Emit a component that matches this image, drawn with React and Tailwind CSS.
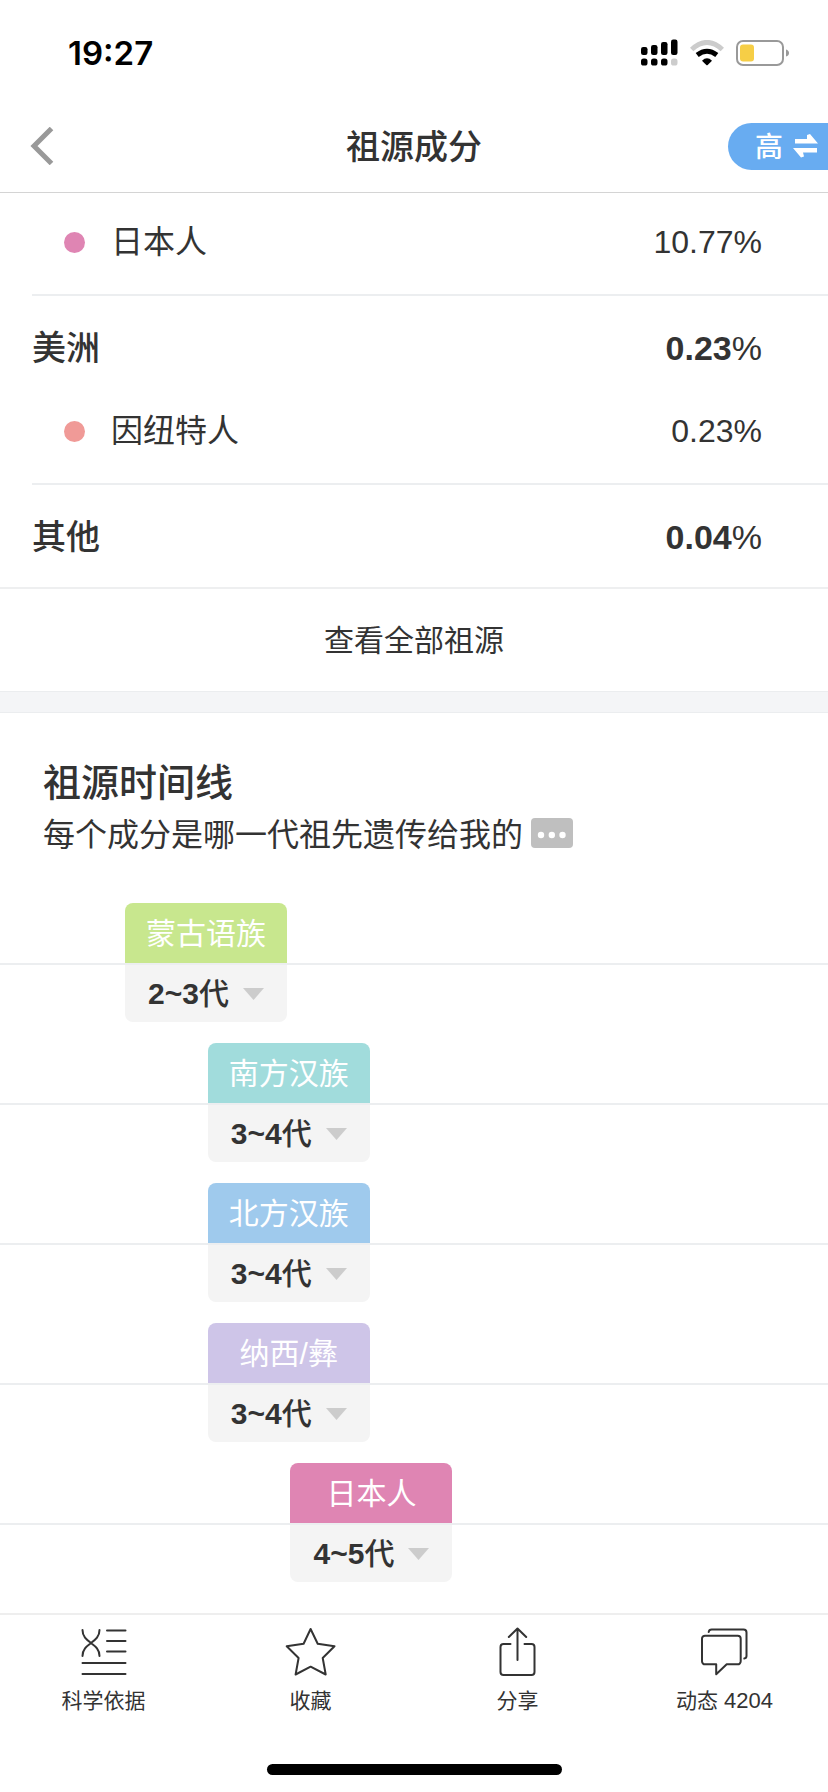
// src/pages/AncestryComposition.jsx
import React, { useState } from 'react';

const groups = [
    {
        items: [{ name: '日本人', value: '10.77', dot: 'bg-[#df85b3]' }],
    },
    {
        title: '美洲',
        value: '0.23',
        items: [{ name: '因纽特人', value: '0.23', dot: 'bg-[#f09a97]' }],
    },
    { title: '其他', value: '0.04', items: [] },
];

const timeline = [
    { name: '蒙古语族', range: '2~3', start: 15, color: 'bg-[#c8e78e]' },
    { name: '南方汉族', range: '3~4', start: 25, color: 'bg-[#a1dcdc]' },
    { name: '北方汉族', range: '3~4', start: 25, color: 'bg-[#9fcaed]' },
    { name: '纳西/彝', range: '3~4', start: 25, color: 'bg-[#cec5e8]' },
    { name: '日本人', range: '4~5', start: 35, color: 'bg-[#df85b3]' },
];

const line = {
    fill: 'none',
    stroke: 'currentColor',
    strokeWidth: 2,
    strokeLinecap: 'round',
    strokeLinejoin: 'round',
    'aria-hidden': true,
};

function ScienceIcon() {
    return (
        <svg width="46" height="48" viewBox="0 0 46 48" {...line}>
            <path d="M1.5 2C1.5 9 6 12 10 15S18.5 21 18.5 28M18.5 2C18.5 9 14 12 10 15S1.5 21 1.5 28" />
            <path d="M26 2.5h18.5M26 13h18.5M26 23.5h18.5M1.5 35h43M1.5 46h43" />
        </svg>
    );
}

function StarIcon() {
    return (
        <svg width="51" height="50" viewBox="0 0 51 50" {...line}>
            <path d="M25.6 2L32.7 16.7 49.5 19.3 37.7 31 40.7 47.5 25.6 39.7 10.6 47.5 13.6 31 1.7 19.3 18.6 16.7Z" />
        </svg>
    );
}

function ShareIcon() {
    return (
        <svg width="37" height="50" viewBox="0 0 37 50" {...line}>
            <path d="M11.5 17H4.5a3 3 0 0 0-3 3v25a3 3 0 0 0 3 3h28a3 3 0 0 0 3-3V20a3 3 0 0 0-3-3H25.5" />
            <path d="M18.5 33V1.5M9.8 10L18.5 1.5 27.2 10" />
        </svg>
    );
}

function ChatIcon() {
    return (
        <svg width="47" height="48" viewBox="0 0 47 48" {...line}>
            <path d="M4 7.7h32.7a3 3 0 0 1 3 3v22.6a3 3 0 0 1-3 3H25.7L15.2 46.3V36.3H4a3 3 0 0 1-3-3V10.7a3 3 0 0 1 3-3Z" />
            <path d="M7.7 4Q8 1.5 10.7 1.5H42.5a3 3 0 0 1 3 3V28Q45.5 30.2 43.3 30.5" />
        </svg>
    );
}

function StatusBar() {
    return (
        <div className="flex h-26 items-center justify-between pt-0.5 pl-[68px] pr-[38px] text-black">
            <span className="font-[Inter,sans-serif] text-[33px] leading-10 font-semibold">19:27</span>
            <div className="flex items-center gap-3">
                {/* Signal double SIM */}
                <svg width="37" height="28" viewBox="0 0 37 28" aria-hidden="true">
                    <rect x="0" y="8" width="6.5" height="8" rx="2.2" />
                    <rect x="10" y="6" width="6.5" height="10" rx="2.2" />
                    <rect x="20" y="3" width="6.5" height="13" rx="2.2" />
                    <rect x="30" y="0.5" width="6.5" height="15.5" rx="2.2" />
                    <rect x="0" y="19.5" width="6.5" height="7" rx="2.6" />
                    <rect x="10" y="19.5" width="6.5" height="7" rx="2.6" />
                    <rect x="20" y="19.5" width="6.5" height="7" rx="2.6" />
                    <rect x="30" y="19.5" width="6.5" height="7" rx="2.6" fill="#ccc" />
                </svg>
                <svg width="34" height="26" viewBox="0 0 34 26" fill="none" strokeWidth="5" aria-hidden="true">
                    <path d="M1.7 9.5Q17-4.5 32.3 9.5" stroke="#ccc" />
                    <path d="M7.2 15Q17 7.5 26.8 15" stroke="#000" />
                    <path d="M12 20.7Q17 15.8 22 20.7L17.7 25q-.7.6-1.4 0Z" fill="#000" />
                </svg>
                <svg width="54" height="26" viewBox="0 0 54 26" aria-hidden="true">
                    <rect x="1" y="1" width="46" height="24" rx="6" fill="none" stroke="#999" strokeWidth="2" />
                    <rect x="4" y="4.5" width="14" height="17" rx="3" fill="#f6ce46" />
                    <path d="M50 9.5q3 1 3 3.500t-3 3.500z" fill="#999" />
                </svg>
            </div>
        </div>
    );
}

function TopBar() {
    return (
        <header className="grid h-[89px] grid-cols-[1fr_auto_1fr] items-center border-b border-[#d4d4d4] pb-1">
            <button type="button" aria-label="返回" className="ml-[30px] w-6 cursor-pointer text-[#999]">
                <svg width="24" height="38" viewBox="0 0 24 38" fill="none" stroke="currentColor" strokeWidth="5">
                    <path d="M21.5 1.5L4 19L21.5 36.5" />
                </svg>
            </button>
            <h1 className="pt-0.5 text-[34px] leading-10 font-medium">祖源成分</h1>
            <button
                type="button"
                className="flex h-[47px] w-[100px] cursor-pointer items-center justify-end gap-2.5 justify-self-end rounded-l-full bg-[#68acf1] pr-2.5 text-white"
            >
                <span className="pt-1 text-[28px] leading-8 font-medium">高</span>
                <svg width="25" height="24" viewBox="0 0 25 24" fill="currentColor" aria-hidden="true">
                    <path d="M2 5H14V1L17 0 25 9.5H2ZM24 14H0L8 23.5 11 22.5 10 18.5H24Z" />
                </svg>
            </button>
        </header>
    );
}

function Group({ group, last }) {
    return (
        <section className={last ? 'pl-8' : 'ml-8 border-b-2 border-[#eceef0]'}>
            {group.title && (
                <div className="flex h-[102px] items-center justify-between pt-0.5 pr-[66px] text-[34px]">
                    <h2 className="font-medium">{group.title}</h2>
                    <span>
                        <b>{group.value}</b>%
                    </span>
                </div>
            )}
            {group.items.map((item) => (
                <div
                    key={item.name}
                    className={`flex items-start justify-between pr-[66px] pl-8 text-[32px] leading-12 ${group.title ? 'h-[85px] pt-[9px]' : 'h-[101px] pt-[25px]'}`}
                >
                    <span className="flex items-center gap-[26px]">
                        <i className={`size-[21px] rounded-full ${item.dot}`} />
                        {item.name}
                    </span>
                    <span>{item.value}%</span>
                </div>
            ))}
        </section>
    );
}

function TimelineRow({ entry }) {
    const [open, setOpen] = useState(false);
    const offset = { marginLeft: `${entry.start}%` };

    return (
        <li className="h-35">
            <div className="border-b-2 border-[#eceef0] pl-px">
                <div
                    className={`flex h-15 w-[162px] items-center justify-center rounded-t-lg text-[30px] text-white ${entry.color}`}
                    style={offset}
                >
                    {entry.name}
                </div>
            </div>
            <div className="pl-px">
                <button
                    type="button"
                    aria-expanded={open}
                    onClick={() => setOpen(!open)}
                    className="flex h-[57px] w-[162px] cursor-pointer items-center justify-center gap-3.5 rounded-b-lg bg-[#f4f4f4] text-[30px] font-medium"
                    style={offset}
                >
                    <span>
                        <b>{entry.range}</b>代
                    </span>
                    <svg width="21" height="12" viewBox="0 0 21 12" fill="#ccc" aria-hidden="true">
                        <path d="M0 0h21L10.5 12z" />
                    </svg>
                </button>
            </div>
        </li>
    );
}

function Tab({ icon, label, count }) {
    return (
        <button type="button" className="flex flex-1 cursor-pointer flex-col items-center gap-2.5">
            <span className="flex h-[50px] items-center">{icon}</span>
            <span className="text-[21px] leading-7">
                {label}
                {count && <span className="text-[22px]"> {count}</span>}
            </span>
        </button>
    );
}

export default function App() {
    return (
        <div className="flex min-h-screen flex-col bg-white font-['Liberation_Sans','Noto_Sans_CJK_SC',sans-serif] text-[#333]">
            <StatusBar />
            <TopBar />

            <main className="flex-1">
                {groups.map((group, i) => (
                    <Group key={i} group={group} last={i === groups.length - 1} />
                ))}
                <button
                    type="button"
                    className="flex h-[104px] w-full cursor-pointer items-center justify-center border-t-2 border-[#eeeff0] text-[30px]"
                >
                    查看全部祖源
                </button>
                <div className="h-[22px] border-y border-[#ebedef] bg-[#f4f5f7]" />

                <div className="px-[43px] pt-[42px]">
                    <h2 className="text-[38px] leading-14 font-medium">祖源时间线</h2>
                    <p className="flex items-center gap-2 text-[32px] leading-12">
                        每个成分是哪一代祖先遗传给我的
                        <button type="button" aria-label="说明" className="cursor-pointer pb-1">
                            <svg width="42" height="30" viewBox="0 0 42 30" aria-hidden="true">
                                <rect width="42" height="30" rx="4" fill="#bfbfbf" />
                                <circle cx="10" cy="17" r="3.2" fill="#fff" />
                                <circle cx="20.8" cy="17" r="3.2" fill="#fff" />
                                <circle cx="31.5" cy="17" r="3.2" fill="#fff" />
                            </svg>
                        </button>
                    </p>
                </div>

                <ul className="pt-11">
                    {timeline.map((entry) => (
                        <TimelineRow key={entry.name} entry={entry} />
                    ))}
                </ul>
            </main>

            <footer className="border-t-2 border-[#eeeeee]">
                <nav className="flex pt-3">
                    <Tab icon={<ScienceIcon />} label="科学依据" />
                    <Tab icon={<StarIcon />} label="收藏" />
                    <Tab icon={<ShareIcon />} label="分享" />
                    <Tab icon={<ChatIcon />} label="动态" count="4204" />
                </nav>
                <div className="mx-auto mt-[49px] mb-[17px] h-[11px] w-[295px] rounded-full bg-black" />
            </footer>
        </div>
    );
}
